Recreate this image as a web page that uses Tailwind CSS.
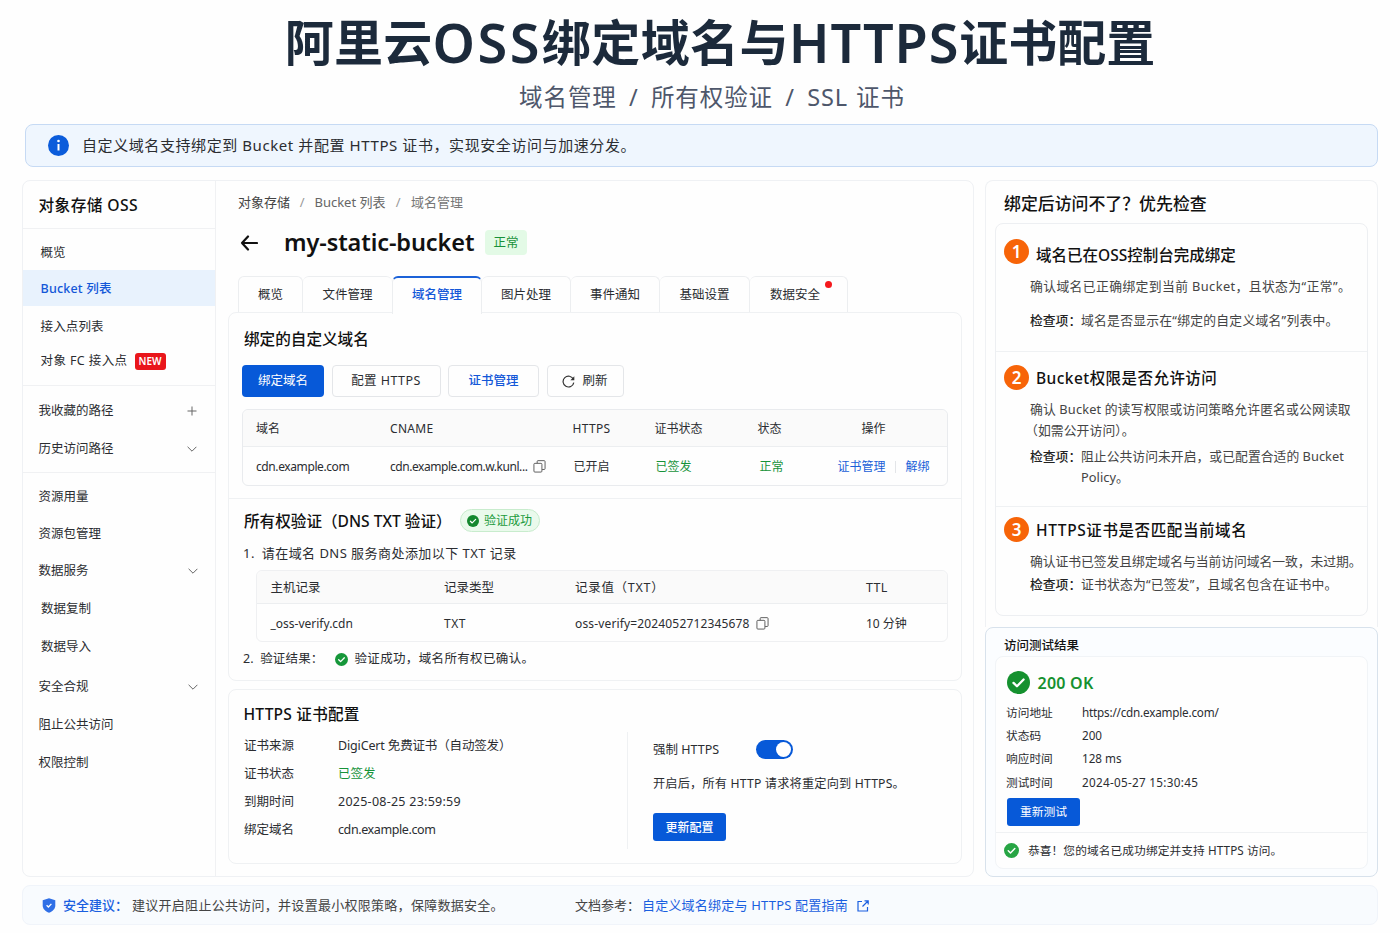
<!DOCTYPE html>
<html lang="zh-CN">
<head>
    <meta charset="UTF-8">
    <meta name="viewport" content="width=device-width, initial-scale=1.0">
    <title>阿里云OSS绑定域名与HTTPS证书配置</title>
    <script src="https://cdn.jsdelivr.net/npm/@tailwindcss/browser@4"></script>
</head>
<body class="w-[1400px] h-[933px] overflow-hidden bg-[#fefefe] font-['Noto_Sans','Noto_Sans_CJK_SC',sans-serif] text-[12.5px] text-[#2b2d31]">
    <!-- 图标 -->
    <svg class="hidden">
        <symbol id="check" viewBox="0 0 24 24">
            <circle cx="12" cy="12" r="12" fill="currentColor"/>
            <path d="M6.8 12.4l3.6 3.5 6.9-7" fill="none" stroke="#fff" stroke-width="2.4" stroke-linecap="round" stroke-linejoin="round"/>
        </symbol>
        <symbol id="copy" viewBox="0 0 14 14">
            <path d="M4.5 3.5V1.6a.9.9 0 0 1 .9-.9H12a1 1 0 0 1 1 1v7.6a.9.9 0 0 1-.9.9H9.8" fill="none" stroke="currentColor" stroke-width="1"/>
            <rect x="1" y="3.6" width="8.6" height="9.4" rx="1" fill="none" stroke="currentColor" stroke-width="1"/>
        </symbol>
        <symbol id="chevron" viewBox="0 0 10 6">
            <path d="M.6.8L5 5.2 9.4.8" fill="none" stroke="currentColor" stroke-width="1"/>
        </symbol>
    </svg>

    <!-- 标题 -->
    <header class="h-[124px] flex flex-col items-center">
        <h1 class="h-[84px] pl-10 flex items-center font-semibold text-[49px] leading-none text-[#1c2a3b] whitespace-nowrap">
            <span class="font-bold tracking-[0.2px]">阿里云</span><span class="text-[54px] tracking-[2.5px]">OSS</span><span class="font-bold tracking-[0.4px]">绑定域名与</span><span class="text-[54px] tracking-[0.8px]">HTTPS</span><span class="font-bold">证书配置</span>
        </h1>
        <p class="-mt-px h-7 pl-6 text-[23.5px] leading-7 tracking-[0.9px] [word-spacing:5.3px] text-[#4e576b] whitespace-pre">域名管理 / 所有权验证 / SSL<span class="[word-spacing:1px]"> 证书</span></p>
    </header>

    <!-- 提示条 -->
    <div class="ml-[25px] w-[1353px] h-[43px] pl-[22px] flex items-center gap-[13px] rounded-lg border border-[#c6daf4] bg-[#eff6fe] text-[15px] tracking-[0.58px]">
        <svg class="size-[21px]" viewBox="0 0 21 21"><circle cx="10.5" cy="10.5" r="10.5" fill="#0b5cdb"/><circle cx="10.5" cy="6" r="1.3" fill="#fff"/><path d="M10.5 9v6.5" stroke="#fff" stroke-width="2"/></svg>
        <span>自定义域名支持绑定到 Bucket 并配置 HTTPS 证书，实现安全访问与加速分发。</span>
    </div>

    <main class="mt-[13px] ml-[22px] flex gap-[11px] h-[697px]">
        <div class="w-[952px] h-[697px] flex rounded-lg border border-[#eff1f4]">
            <!-- 侧边栏 -->
            <aside class="w-[193px] shrink-0 border-r border-[#f0f1f3] whitespace-nowrap">
                <div class="h-[48px] pl-[15.5px] pt-[2px] flex items-center border-b border-[#f0f1f3] text-[15.7px] tracking-[0.4px] font-medium text-[#111]">对象存储 OSS</div>
                <nav class="pt-[5px] h-[157px] border-b border-[#f0f1f3]">
                    <div class="h-[36px] pl-[17.5px] pt-[2px] flex items-center">概览</div>
                    <div class="h-[36px] pl-[17.5px] pt-[3px] flex items-center bg-[#e8f2fd] font-medium tracking-[0.2px] text-[#1357d8]">Bucket 列表</div>
                    <div class="h-[38px] pl-[17.5px] pt-[4px] flex items-center tracking-[0.15px]">接入点列表</div>
                    <div class="h-[33px] pl-[17.5px] pt-[1px] flex items-center tracking-[0.4px]">对象 FC 接入点<span class="ml-[7px] w-[31px] h-[17px] rounded-[3px] bg-[#e9161b] text-center text-[10px] leading-[17px] tracking-normal font-semibold text-white">NEW</span></div>
                </nav>
                <div class="pt-[6px] h-[87px] border-b border-[#f0f1f3]">
                    <div class="h-[38px] pl-[15.5px] pr-[18px] flex items-center justify-between">我收藏的路径<svg class="size-[10px] text-[#666]" viewBox="0 0 10 10"><path d="M5 .5v9M.5 5h9" stroke="currentColor"/></svg></div>
                    <div class="h-[38px] pl-[15.5px] pr-[18px] flex items-center justify-between">历史访问路径<svg class="w-[10px] h-[6px] text-[#666]"><use href="#chevron"/></svg></div>
                </div>
                <div class="pt-[6px]">
                    <div class="h-[37px] pl-[15.5px] flex items-center">资源用量</div>
                    <div class="h-[37px] pl-[15.5px] flex items-center">资源包管理</div>
                    <div class="h-[37px] pl-[15.5px] pr-[17px] flex items-center justify-between">数据服务<svg class="-mt-px w-[10px] h-[6px] text-[#666]"><use href="#chevron"/></svg></div>
                    <div class="h-[38px] pl-[18px] pt-[1px] flex items-center">数据复制</div>
                    <div class="h-[38px] pl-[18px] flex items-center">数据导入</div>
                    <div class="h-[42px] pl-[15.5px] pr-[17px] flex items-center justify-between">安全合规<svg class="w-[10px] h-[6px] text-[#666]"><use href="#chevron"/></svg></div>
                    <div class="h-[35px] pl-[15.5px] flex items-center">阻止公共访问</div>
                    <div class="h-[41px] pl-[15.5px] flex items-center">权限控制</div>
                </div>
            </aside>

            <!-- 主内容 -->
            <section class="flex-1 pl-[12px] pr-[11px] whitespace-nowrap">
                <div class="h-[42px] pl-[10px] pt-[1px] flex items-center text-[13px] text-[#666]">
                    <span class="text-[#444]">对象存储</span><span class="mx-[9.8px] text-[#999]">/</span><span>Bucket 列表</span><span class="mx-[10.3px] text-[#999]">/</span><span class="text-[#777]">域名管理</span>
                </div>
                <div class="h-[39px] pl-[12px] flex items-center">
                    <svg class="w-[18px] h-[16px]" viewBox="0 0 18 16"><path d="M8 1.5L2 8l6 6.5M2 8h15" fill="none" stroke="#111" stroke-width="2.2" stroke-linecap="round" stroke-linejoin="round"/></svg>
                    <h2 class="ml-[26px] w-[201px] text-[23.5px] tracking-[-0.1px] font-semibold text-[#111]">my-static-bucket</h2>
                    <span class="w-[42px] h-[25px] rounded bg-[#e3fae6] text-center leading-[25px] text-[12.5px] text-[#189139]">正常</span>
                </div>
                <div class="mt-[14px] pl-[10px] h-[37px] flex">
                    <div class="w-[65px] h-[36px] rounded-t-md border border-b-0 border-[#eceef0] text-center leading-[35px]">概览</div>
                    <div class="w-[89px] h-[36px] rounded-t-md border-t border-[#eceef0] text-center leading-[35px]">文件管理</div>
                    <div class="relative w-[90px] h-[38px] rounded-t-md border-x border-t-2 border-x-[#eceef0] border-t-[#1c62d8] bg-[#fefefe] text-center leading-[34px] font-medium text-[#1357d8]">域名管理</div>
                    <div class="w-[89px] h-[36px] rounded-t-md border-t border-r border-[#eceef0] text-center leading-[35px]">图片处理</div>
                    <div class="w-[89px] h-[36px] rounded-t-md border-t border-r border-[#eceef0] text-center leading-[35px]">事件通知</div>
                    <div class="w-[90px] h-[36px] rounded-t-md border-t border-r border-[#eceef0] text-center leading-[35px]">基础设置</div>
                    <div class="relative w-[98px] h-[36px] pr-[7px] rounded-t-md border-t border-r border-[#eceef0] text-center leading-[35px]">数据安全<i class="absolute left-[75px] top-[4px] size-[7px] rounded-full bg-[#f5191d]"></i></div>
                </div>

                <div class="-mt-px h-[369px] rounded-lg border border-[#eff1f3]">
                    <h3 class="h-[52px] pt-[1px] pl-[15px] flex items-center text-[15.6px] font-medium text-[#111]">绑定的自定义域名</h3>
                    <div class="pl-[13px] h-[32px] flex gap-[7.5px]">
                        <button class="w-[82px] h-[32px] rounded bg-[#0759d8] text-white">绑定域名</button>
                        <button class="w-[109px] h-[32px] rounded border border-[#e4e6e9] tracking-[0.45px]">配置 HTTPS</button>
                        <button class="w-[91px] h-[32px] rounded border border-[#e4e6e9] font-medium text-[#1357d8]">证书管理</button>
                        <button class="w-[77px] h-[32px] rounded border border-[#e4e6e9] flex items-center justify-center gap-[7px]"><svg class="size-[13px]" viewBox="0 0 13 13"><path d="M11.4 4.3A5.4 5.4 0 1 0 11.8 7.6" fill="none" stroke="#333" stroke-width="1.2"/><path d="M12.3 1.3v4H8.400z" fill="#333"/></svg>刷新</button>
                    </div>
                    <div class="ml-[13px] mt-3 w-[706px] h-[77px] rounded-md border border-[#e9ebee] text-[12px]">
                        <div class="h-[37px] pt-[1px] pl-[13px] grid grid-cols-[134px_182.5px_82px_103px_104px_1fr] items-center rounded-t-md bg-[#fafafa] border-b border-[#eceef0]">
                            <span>域名</span><span class="tracking-[0.3px]">CNAME</span><span class="tracking-[0.3px]">HTTPS</span><span>证书状态</span><span>状态</span><span>操作</span>
                        </div>
                        <div class="h-[38px] pt-[1px] pl-[13px] grid grid-cols-[134px_183.5px_82px_104px_78px_1fr] items-center">
                            <span class="tracking-[-0.4px]">cdn.example.com</span>
                            <span class="flex items-center tracking-[-0.45px]">cdn.example.com.w.kunl...<svg class="ml-[6px] size-[13px] text-[#555]"><use href="#copy"/></svg></span>
                            <span>已开启</span><span class="text-[#17933a]">已签发</span><span class="text-[#17933a]">正常</span>
                            <span class="flex items-center text-[#1a5fd8]">证书管理<i class="mx-[9.5px] w-px h-3 bg-[#e3e5e8]"></i>解绑</span>
                        </div>
                    </div>
                    <div class="mt-3 border-t border-[#eff1f3] h-[43px] pt-[1px] pl-[15px] flex items-center">
                        <h3 class="pt-[3px] text-[15.6px] font-medium text-[#111]">所有权验证（DNS TXT 验证）</h3>
                        <span class="ml-2 w-[80px] h-[23px] flex items-center justify-center gap-[5px] rounded-full border border-[#c8eccd] bg-[#eafaec] text-[12px] text-[#1c9a3d]"><svg class="size-3 text-[#15882f]"><use href="#check"/></svg>验证成功</span>
                    </div>
                    <p class="h-[24px] pl-[14px] text-[13px] tracking-[0.45px] leading-[24px]">1.&ensp;请在域名 DNS 服务商处添加以下 TXT 记录</p>
                    <div class="ml-[27px] mt-[5px] w-[692px] h-[72px] rounded-md border border-[#eff0f2]">
                        <div class="h-[33px] pt-[2px] pl-[13.5px] grid grid-cols-[173.5px_131px_291px_1fr] items-center rounded-t-md bg-[#fafafa] border-b border-[#eceef0]">
                            <span>主机记录</span><span>记录类型</span><span class="tracking-[0.7px]">记录值（TXT）</span><span class="tracking-[0.3px]">TTL</span>
                        </div>
                        <div class="h-[37px] pt-[2px] pl-[13.5px] grid grid-cols-[173.5px_131px_291px_1fr] items-center text-[12px]">
                            <span>_oss-verify.cdn</span><span class="tracking-[0.5px]">TXT</span><span class="flex items-center tracking-[0.15px]">oss-verify=2024052712345678<svg class="ml-[6px] size-[13px] text-[#555]"><use href="#copy"/></svg></span><span>10 分钟</span>
                        </div>
                    </div>
                    <p class="mt-[5px] h-[24px] pl-[14px] flex items-center"><span class="tracking-[0.15px]">2.&ensp;验证结果：</span><svg class="ml-3 mr-[6px] size-[13px] text-[#16973a]"><use href="#check"/></svg><span class="tracking-[0.35px]">验证成功，域名所有权已确认。</span></p>
                </div>

                <div class="mt-2 h-[175px] rounded-lg border border-[#eff1f3]">
                    <h3 class="h-[49px] pl-[14.5px] flex items-center text-[15.6px] tracking-[0.2px] font-medium text-[#111]">HTTPS 证书配置</h3>
                    <div class="flex -mt-[7px]">
                        <div class="w-[399px] h-[117px] pl-[15px] border-r border-[#eff1f3] grid grid-cols-[94px_1fr] grid-rows-[28px_28px_28px_28px] items-center">
                            <span>证书来源</span><span class="tracking-[-0.15px]">DigiCert 免费证书（自动签发）</span>
                            <span>证书状态</span><span class="text-[#17933a]">已签发</span>
                            <span>到期时间</span><span class="tracking-[0.25px]">2025-08-25 23:59:59</span>
                            <span>绑定域名</span><span class="tracking-[-0.4px]">cdn.example.com</span>
                        </div>
                        <div class="pl-[25px]">
                            <div class="h-[36px] flex items-center"><span class="w-[103px]">强制 HTTPS</span><i class="-mt-px w-[37px] h-[19px] p-[2px] flex justify-end rounded-full bg-[#0759d8]"><b class="size-[15px] rounded-full bg-white"></b></i></div>
                            <p class="h-[31px] leading-[31px] text-[12.2px] tracking-[0.18px]">开启后，所有 HTTP 请求将重定向到 HTTPS。</p>
                            <button class="mt-[14px] w-[73px] h-[28px] pt-[1px] rounded-[3px] bg-[#0759d8] text-[12px] font-medium text-white">更新配置</button>
                        </div>
                    </div>
                </div>
            </section>
        </div>

        <!-- 右侧栏 -->
        <div class="w-[393px] flex flex-col whitespace-nowrap">
            <section class="h-[447px] px-[9px] rounded-t-lg border border-b-0 border-[#eff1f4]">
                <h3 class="h-[42px] pt-[3px] pl-[9px] flex items-center text-[16.9px] font-medium text-[#111]">绑定后访问不了？优先检查</h3>
                <div class="h-[393px] rounded-lg border border-[#edeff2] text-[12.8px]">
                    <div class="h-[128px] pl-2 pt-[15px] border-b border-[#eff1f3]">
                        <div class="flex gap-[7px]"><b class="size-[25px] rounded-full bg-[#f76408] text-center text-[17px] leading-[25px] font-semibold text-white">1</b><h4 class="pt-[3px] text-[15.5px] leading-[26px] font-medium text-[#111]">域名已在OSS控制台完成绑定</h4></div>
                        <p class="pl-[26px] mt-[7px] leading-[22px] tracking-[0.4px] text-[#444]">确认域名已正确绑定到当前 Bucket，且状态为“正常”。</p>
                        <p class="pl-[26px] mt-[12px] leading-[22px] flex"><b class="w-[51px] font-medium text-[#222]">检查项：</b><span class="tracking-[0.25px] text-[#444]">域名是否显示在“绑定的自定义域名”列表中。</span></p>
                    </div>
                    <div class="h-[155px] pl-2 pt-[13px] border-b border-[#eff1f3]">
                        <div class="flex gap-[7px]"><b class="size-[25px] rounded-full bg-[#f76408] text-center text-[17px] leading-[25px] font-semibold text-white">2</b><h4 class="pt-[1px] text-[15.5px] leading-[25px] tracking-[0.45px] font-medium text-[#111]">Bucket权限是否允许访问</h4></div>
                        <p class="pl-[26px] mt-[8px] leading-[21px] tracking-[0.15px] text-[#444]">确认 Bucket 的读写权限或访问策略允许匿名或公网读取<br><span class="-ml-[5px] tracking-[0.1px]">（如需公开访问）</span>。</p>
                        <p class="pl-[26px] mt-[5px] leading-[21px] flex"><b class="w-[51px] font-medium text-[#222]">检查项：</b><span class="tracking-[0.04px] text-[#444]">阻止公共访问未开启，或已配置合适的 Bucket<br>Policy。</span></p>
                    </div>
                    <div class="pl-2 pt-[10px]">
                        <div class="flex gap-[7px]"><b class="size-[25px] rounded-full bg-[#f76408] text-center text-[17px] leading-[25px] font-semibold text-white">3</b><h4 class="pt-[1px] text-[15.5px] leading-[25px] tracking-[0.6px] font-medium text-[#111]">HTTPS证书是否匹配当前域名</h4></div>
                        <p class="pl-[26px] mt-[7px] leading-[22px] tracking-[-0.05px] text-[#444]">确认证书已签发且绑定域名与当前访问域名一致，未过期。</p>
                        <p class="pl-[26px] mt-[1px] leading-[22px] flex"><b class="w-[51px] font-medium text-[#222]">检查项：</b><span class="tracking-[0.2px] text-[#444]">证书状态为“已签发”，且域名包含在证书中。</span></p>
                    </div>
                </div>
            </section>
            <section class="h-[250px] px-[9px] rounded-lg border border-[#d8e2ec] bg-[#fbfdff]">
                <h3 class="h-[28px] pt-[7px] pl-[9px] leading-[22px] text-[12.5px] font-medium text-[#111]">访问测试结果</h3>
                <div class="h-[213px] rounded-lg border border-[#f1f4f7] bg-[#fefefe] text-[11.7px]">
                    <div class="pl-[10.5px] h-[50px] pt-[1px] flex items-center gap-2"><svg class="size-[23px] text-[#15912f]"><use href="#check"/></svg><span class="pt-[1px] text-[16px] tracking-[0.25px] font-semibold text-[#15912f]">200 OK</span></div>
                    <div class="-mt-[6px] pl-[10px] grid grid-cols-[76px_1fr] grid-rows-[23px_23px_24px_23px] items-center">
                        <span>访问地址</span><span class="tracking-[-0.2px]">https://cdn.example.com/</span>
                        <span>状态码</span><span>200</span>
                        <span>响应时间</span><span>128 ms</span>
                        <span>测试时间</span><span class="tracking-[0.3px]">2024-05-27 15:30:45</span>
                    </div>
                    <button class="mt-[4px] ml-[11px] w-[73px] h-[28px] rounded-[3px] bg-[#0759d8] text-[11.8px] text-white">重新测试</button>
                    <div class="mt-[6px] h-[36px] pl-[8px] flex items-center gap-[9px] border-t border-[#eff1f3]"><svg class="size-[15px] text-[#27a544]"><use href="#check"/></svg><span class="tracking-[0.1px]">恭喜！您的域名已成功绑定并支持 HTTPS 访问。</span></div>
                </div>
            </section>
        </div>
    </main>

    <!-- 底部建议 -->
    <footer class="mt-2 ml-[22px] w-[1356px] h-[40px] pt-[1px] pl-[19px] flex items-center rounded-lg border border-[#f0f4fa] bg-[#f8fbfe] text-[13px] whitespace-nowrap">
        <svg class="-mt-px w-[14px] h-[15px]" viewBox="0 0 14 15"><path d="M7 .2l6.3 2v5.4c0 3.4-2.6 5.8-6.3 7.2C3.3 13.4.7 11 .7 7.6V2.2z" fill="#2f6fe6"/><path d="M4.6 7.3l1.8 1.7 3-3.1" fill="none" stroke="#fff" stroke-width="1.3"/></svg>
        <b class="ml-[7px] w-[69px] font-medium text-[#1a5fe0]">安全建议：</b>
        <span class="w-[443px] tracking-[0.28px] text-[#444]">建议开启阻止公共访问，并设置最小权限策略，保障数据安全。</span>
        <span class="w-[67px] text-[#444]">文档参考：</span>
        <span class="tracking-[0.2px] text-[#1a5fe0]">自定义域名绑定与 HTTPS 配置指南</span>
        <svg class="ml-[9px] size-3 text-[#1a5fe0]" viewBox="0 0 12 12"><path d="M5 1.5H1V11h9.5V7M7.5.8h3.7v3.7M11 1L5.5 6.5" fill="none" stroke="currentColor" stroke-width="1.2"/></svg>
    </footer>
</body>
</html>
